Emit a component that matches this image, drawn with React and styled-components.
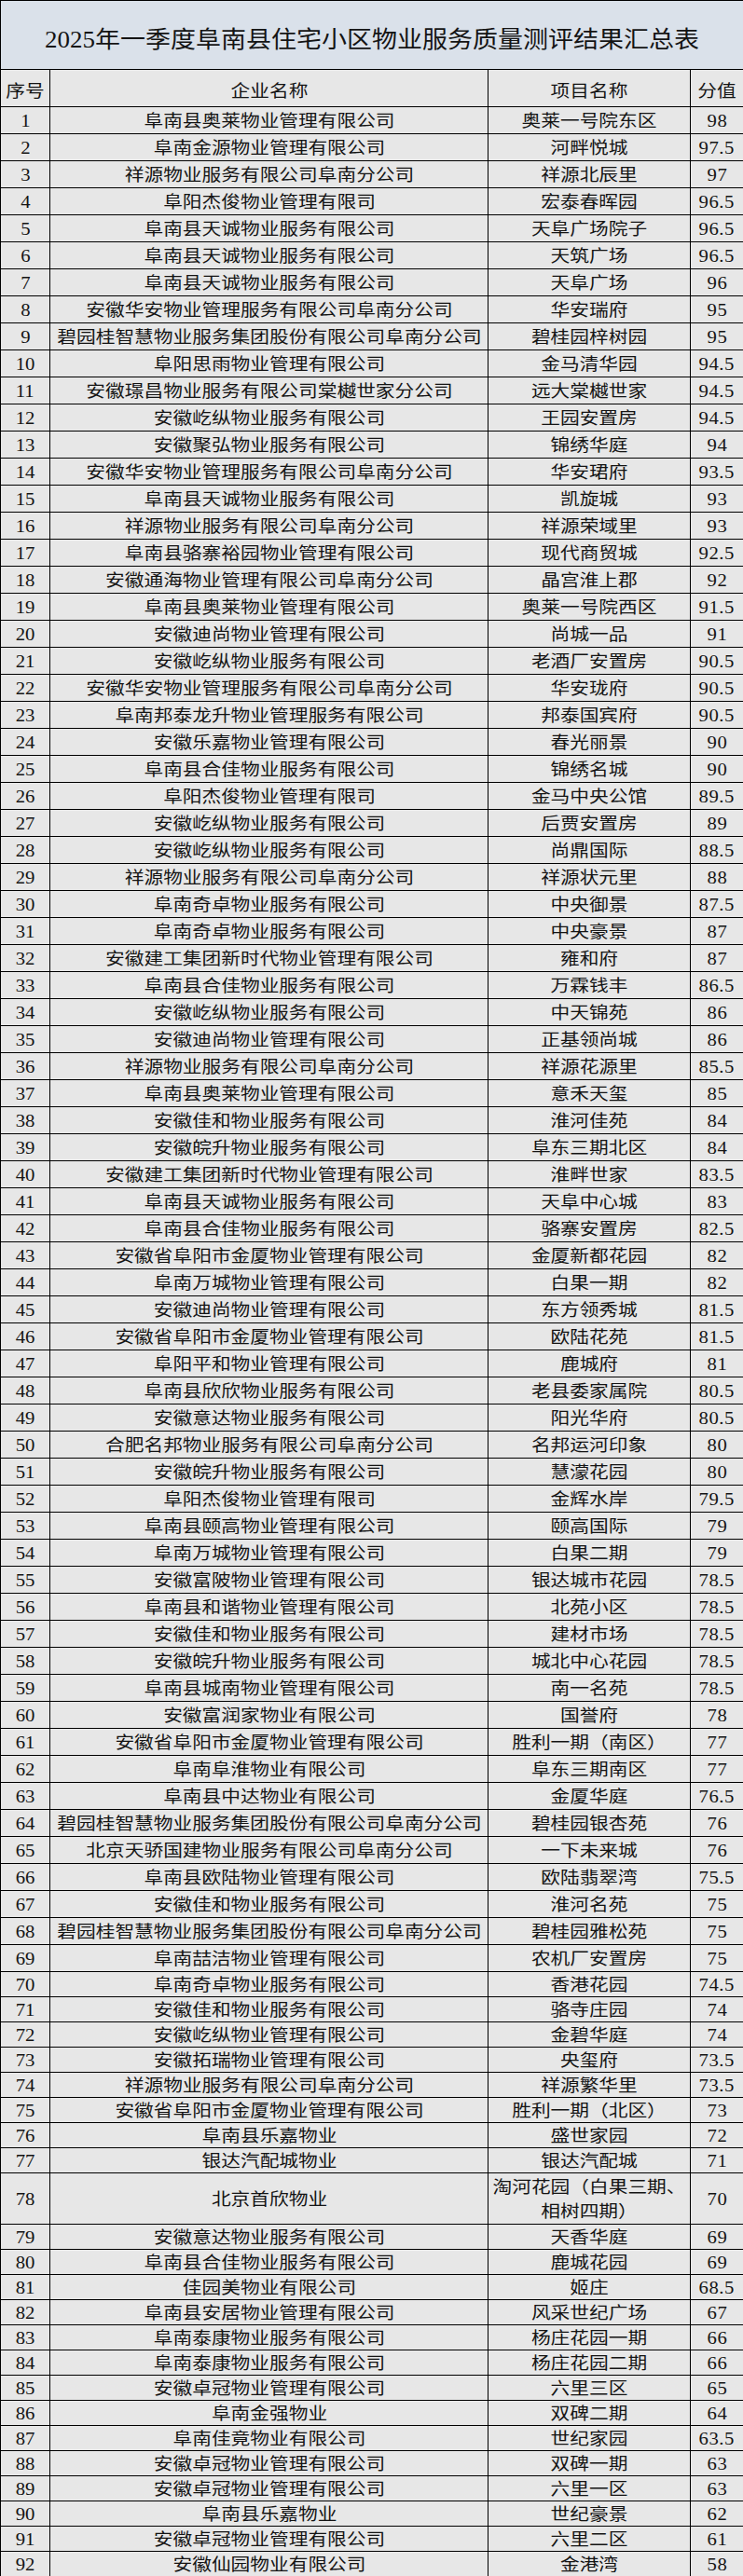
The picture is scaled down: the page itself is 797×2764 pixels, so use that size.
import styled, { createGlobalStyle } from 'styled-components';

const GlobalStyle = createGlobalStyle`
  html, body {
    margin: 0;
    padding: 0;
    background: #ffffff;
  }
`;

const rows = [
  [1, '阜南县奥莱物业管理有限公司', '奥莱一号院东区', '98'],
  [2, '阜南金源物业管理有限公司', '河畔悦城', '97.5'],
  [3, '祥源物业服务有限公司阜南分公司', '祥源北辰里', '97'],
  [4, '阜阳杰俊物业管理有限司', '宏泰春晖园', '96.5'],
  [5, '阜南县天诚物业服务有限公司', '天阜广场院子', '96.5'],
  [6, '阜南县天诚物业服务有限公司', '天筑广场', '96.5'],
  [7, '阜南县天诚物业服务有限公司', '天阜广场', '96'],
  [8, '安徽华安物业管理服务有限公司阜南分公司', '华安瑞府', '95'],
  [9, '碧园桂智慧物业服务集团股份有限公司阜南分公司', '碧桂园梓树园', '95'],
  [10, '阜阳思雨物业管理有限公司', '金马清华园', '94.5'],
  [11, '安徽璟昌物业服务有限公司棠樾世家分公司', '远大棠樾世家', '94.5'],
  [12, '安徽屹纵物业服务有限公司', '王园安置房', '94.5'],
  [13, '安徽聚弘物业服务有限公司', '锦绣华庭', '94'],
  [14, '安徽华安物业管理服务有限公司阜南分公司', '华安珺府', '93.5'],
  [15, '阜南县天诚物业服务有限公司', '凯旋城', '93'],
  [16, '祥源物业服务有限公司阜南分公司', '祥源荣域里', '93'],
  [17, '阜南县骆寨裕园物业管理有限公司', '现代商贸城', '92.5'],
  [18, '安徽通海物业管理有限公司阜南分公司', '晶宫淮上郡', '92'],
  [19, '阜南县奥莱物业管理有限公司', '奥莱一号院西区', '91.5'],
  [20, '安徽迪尚物业管理有限公司', '尚城一品', '91'],
  [21, '安徽屹纵物业服务有限公司', '老酒厂安置房', '90.5'],
  [22, '安徽华安物业管理服务有限公司阜南分公司', '华安珑府', '90.5'],
  [23, '阜南邦泰龙升物业管理服务有限公司', '邦泰国宾府', '90.5'],
  [24, '安徽乐嘉物业管理有限公司', '春光丽景', '90'],
  [25, '阜南县合佳物业服务有限公司', '锦绣名城', '90'],
  [26, '阜阳杰俊物业管理有限司', '金马中央公馆', '89.5'],
  [27, '安徽屹纵物业服务有限公司', '后贾安置房', '89'],
  [28, '安徽屹纵物业服务有限公司', '尚鼎国际', '88.5'],
  [29, '祥源物业服务有限公司阜南分公司', '祥源状元里', '88'],
  [30, '阜南奇卓物业服务有限公司', '中央御景', '87.5'],
  [31, '阜南奇卓物业服务有限公司', '中央豪景', '87'],
  [32, '安徽建工集团新时代物业管理有限公司', '雍和府', '87'],
  [33, '阜南县合佳物业服务有限公司', '万霖钱丰', '86.5'],
  [34, '安徽屹纵物业服务有限公司', '中天锦苑', '86'],
  [35, '安徽迪尚物业管理有限公司', '正基领尚城', '86'],
  [36, '祥源物业服务有限公司阜南分公司', '祥源花源里', '85.5'],
  [37, '阜南县奥莱物业管理有限公司', '意禾天玺', '85'],
  [38, '安徽佳和物业服务有限公司', '淮河佳苑', '84'],
  [39, '安徽皖升物业服务有限公司', '阜东三期北区', '84'],
  [40, '安徽建工集团新时代物业管理有限公司', '淮畔世家', '83.5'],
  [41, '阜南县天诚物业服务有限公司', '天阜中心城', '83'],
  [42, '阜南县合佳物业服务有限公司', '骆寨安置房', '82.5'],
  [43, '安徽省阜阳市金厦物业管理有限公司', '金厦新都花园', '82'],
  [44, '阜南万城物业管理有限公司', '白果一期', '82'],
  [45, '安徽迪尚物业管理有限公司', '东方领秀城', '81.5'],
  [46, '安徽省阜阳市金厦物业管理有限公司', '欧陆花苑', '81.5'],
  [47, '阜阳平和物业管理有限公司', '鹿城府', '81'],
  [48, '阜南县欣欣物业服务有限公司', '老县委家属院', '80.5'],
  [49, '安徽意达物业服务有限公司', '阳光华府', '80.5'],
  [50, '合肥名邦物业服务有限公司阜南分公司', '名邦运河印象', '80'],
  [51, '安徽皖升物业服务有限公司', '慧濛花园', '80'],
  [52, '阜阳杰俊物业管理有限司', '金辉水岸', '79.5'],
  [53, '阜南县颐高物业管理有限公司', '颐高国际', '79'],
  [54, '阜南万城物业管理有限公司', '白果二期', '79'],
  [55, '安徽富陂物业管理有限公司', '银达城市花园', '78.5'],
  [56, '阜南县和谐物业管理有限公司', '北苑小区', '78.5'],
  [57, '安徽佳和物业服务有限公司', '建材市场', '78.5'],
  [58, '安徽皖升物业服务有限公司', '城北中心花园', '78.5'],
  [59, '阜南县城南物业管理有限公司', '南一名苑', '78.5'],
  [60, '安徽富润家物业有限公司', '国誉府', '78'],
  [61, '安徽省阜阳市金厦物业管理有限公司', '胜利一期（南区）', '77'],
  [62, '阜南阜淮物业有限公司', '阜东三期南区', '77'],
  [63, '阜南县中达物业有限公司', '金厦华庭', '76.5'],
  [64, '碧园桂智慧物业服务集团股份有限公司阜南分公司', '碧桂园银杏苑', '76'],
  [65, '北京天骄国建物业服务有限公司阜南分公司', '一下未来城', '76'],
  [66, '阜南县欧陆物业管理有限公司', '欧陆翡翠湾', '75.5'],
  [67, '安徽佳和物业服务有限公司', '淮河名苑', '75'],
  [68, '碧园桂智慧物业服务集团股份有限公司阜南分公司', '碧桂园雅松苑', '75'],
  [69, '阜南喆洁物业管理有限公司', '农机厂安置房', '75'],
  [70, '阜南奇卓物业服务有限公司', '香港花园', '74.5'],
  [71, '安徽佳和物业服务有限公司', '骆寺庄园', '74'],
  [72, '安徽屹纵物业管理有限公司', '金碧华庭', '74'],
  [73, '安徽拓瑞物业管理有限公司', '央玺府', '73.5'],
  [74, '祥源物业服务有限公司阜南分公司', '祥源繁华里', '73.5'],
  [75, '安徽省阜阳市金厦物业管理有限公司', '胜利一期（北区）', '73'],
  [76, '阜南县乐嘉物业', '盛世家园', '72'],
  [77, '银达汽配城物业', '银达汽配城', '71'],
  [78, '北京首欣物业', '淘河花园（白果三期、\n相树四期）', '70'],
  [79, '安徽意达物业服务有限公司', '天香华庭', '69'],
  [80, '阜南县合佳物业服务有限公司', '鹿城花园', '69'],
  [81, '佳园美物业有限公司', '姬庄', '68.5'],
  [82, '阜南县安居物业管理有限公司', '风采世纪广场', '67'],
  [83, '阜南泰康物业服务有限公司', '杨庄花园一期', '66'],
  [84, '阜南泰康物业服务有限公司', '杨庄花园二期', '66'],
  [85, '安徽卓冠物业管理有限公司', '六里三区', '65'],
  [86, '阜南金强物业', '双碑二期', '64'],
  [87, '阜南佳竟物业有限公司', '世纪家园', '63.5'],
  [88, '安徽卓冠物业管理有限公司', '双碑一期', '63'],
  [89, '安徽卓冠物业管理有限公司', '六里一区', '63'],
  [90, '阜南县乐嘉物业', '世纪豪景', '62'],
  [91, '安徽卓冠物业管理有限公司', '六里二区', '61'],
  [92, '安徽仙园物业有限公司', '金港湾', '58'],
];

// the sheet was printed with tighter rows from no. 70 on
const rowHeight = (no) => {
  if (no === 78) return 54;
  if (no >= 70) return 27;
  return 29;
};

const App = () => {
  return (
    <>
      <GlobalStyle />
      <Sheet>
        <colgroup>
          <col style={{ width: 53 }} />
          <col style={{ width: 470 }} />
          <col style={{ width: 217 }} />
          <col style={{ width: 57 }} />
        </colgroup>
        <thead>
          <TitleRow>
            <TitleCell colSpan={4}>
              <Stretch $scale={1.08}>2025年一季度阜南县住宅小区物业服务质量测评结果汇总表</Stretch>
            </TitleCell>
          </TitleRow>
          <HeadRow>
            <HeadCell><Stretch>序号</Stretch></HeadCell>
            <HeadCell><Stretch>企业名称</Stretch></HeadCell>
            <HeadCell><Stretch>项目名称</Stretch></HeadCell>
            <HeadCell><Stretch>分值</Stretch></HeadCell>
          </HeadRow>
        </thead>
        <tbody>
          {rows.map(([no, company, project, score]) => (
            <Row key={no} $h={rowHeight(no)}>
              <Cell><Stretch>{no}</Stretch></Cell>
              <Cell><Stretch>{company}</Stretch></Cell>
              <Cell $wrap={project.includes('\n')}><Stretch>{project}</Stretch></Cell>
              <Cell><Score>{score}</Score></Cell>
            </Row>
          ))}
        </tbody>
      </Sheet>
    </>
  );
};

const Sheet = styled.table`
  width: 797px;
  border-collapse: collapse;
  table-layout: fixed;
  font-family: "Liberation Serif", "Noto Sans CJK SC", serif;
  color: #141414;
`;
const TitleRow = styled.tr`
  height: 74px;
`;
const HeadRow = styled.tr`
  height: 40px;
`;
const Row = styled.tr`
  height: ${(p) => p.$h}px;
`;
const TitleCell = styled.th`
  padding: 0;
  border: 1px solid #000;
  background: #dae1ea;
  font-size: 25px;
  font-weight: normal;
  text-align: center;
  vertical-align: middle;
  padding-top: 4px;
`;
const HeadCell = styled.th`
  padding: 0;
  border: 1px solid #000;
  background: #e7e7e7;
  font-size: 18px;
  font-weight: normal;
  text-align: center;
  vertical-align: middle;
  padding-top: 3px;
`;
const Cell = styled.td`
  padding: 2px 0 0;
  border: 1px solid #000;
  background: #e7e7e7;
  font-size: 18px;
  line-height: ${(p) => (p.$wrap ? '26px' : '22px')};
  text-align: center;
  vertical-align: middle;
  white-space: ${(p) => (p.$wrap ? 'pre-line' : 'nowrap')};
  overflow: hidden;
`;
const Stretch = styled.span`
  display: inline-block;
  transform: scaleX(${(p) => p.$scale || 1.15});
`;
const Score = styled(Stretch)`
  letter-spacing: 0.5px;
`;

export default App;
